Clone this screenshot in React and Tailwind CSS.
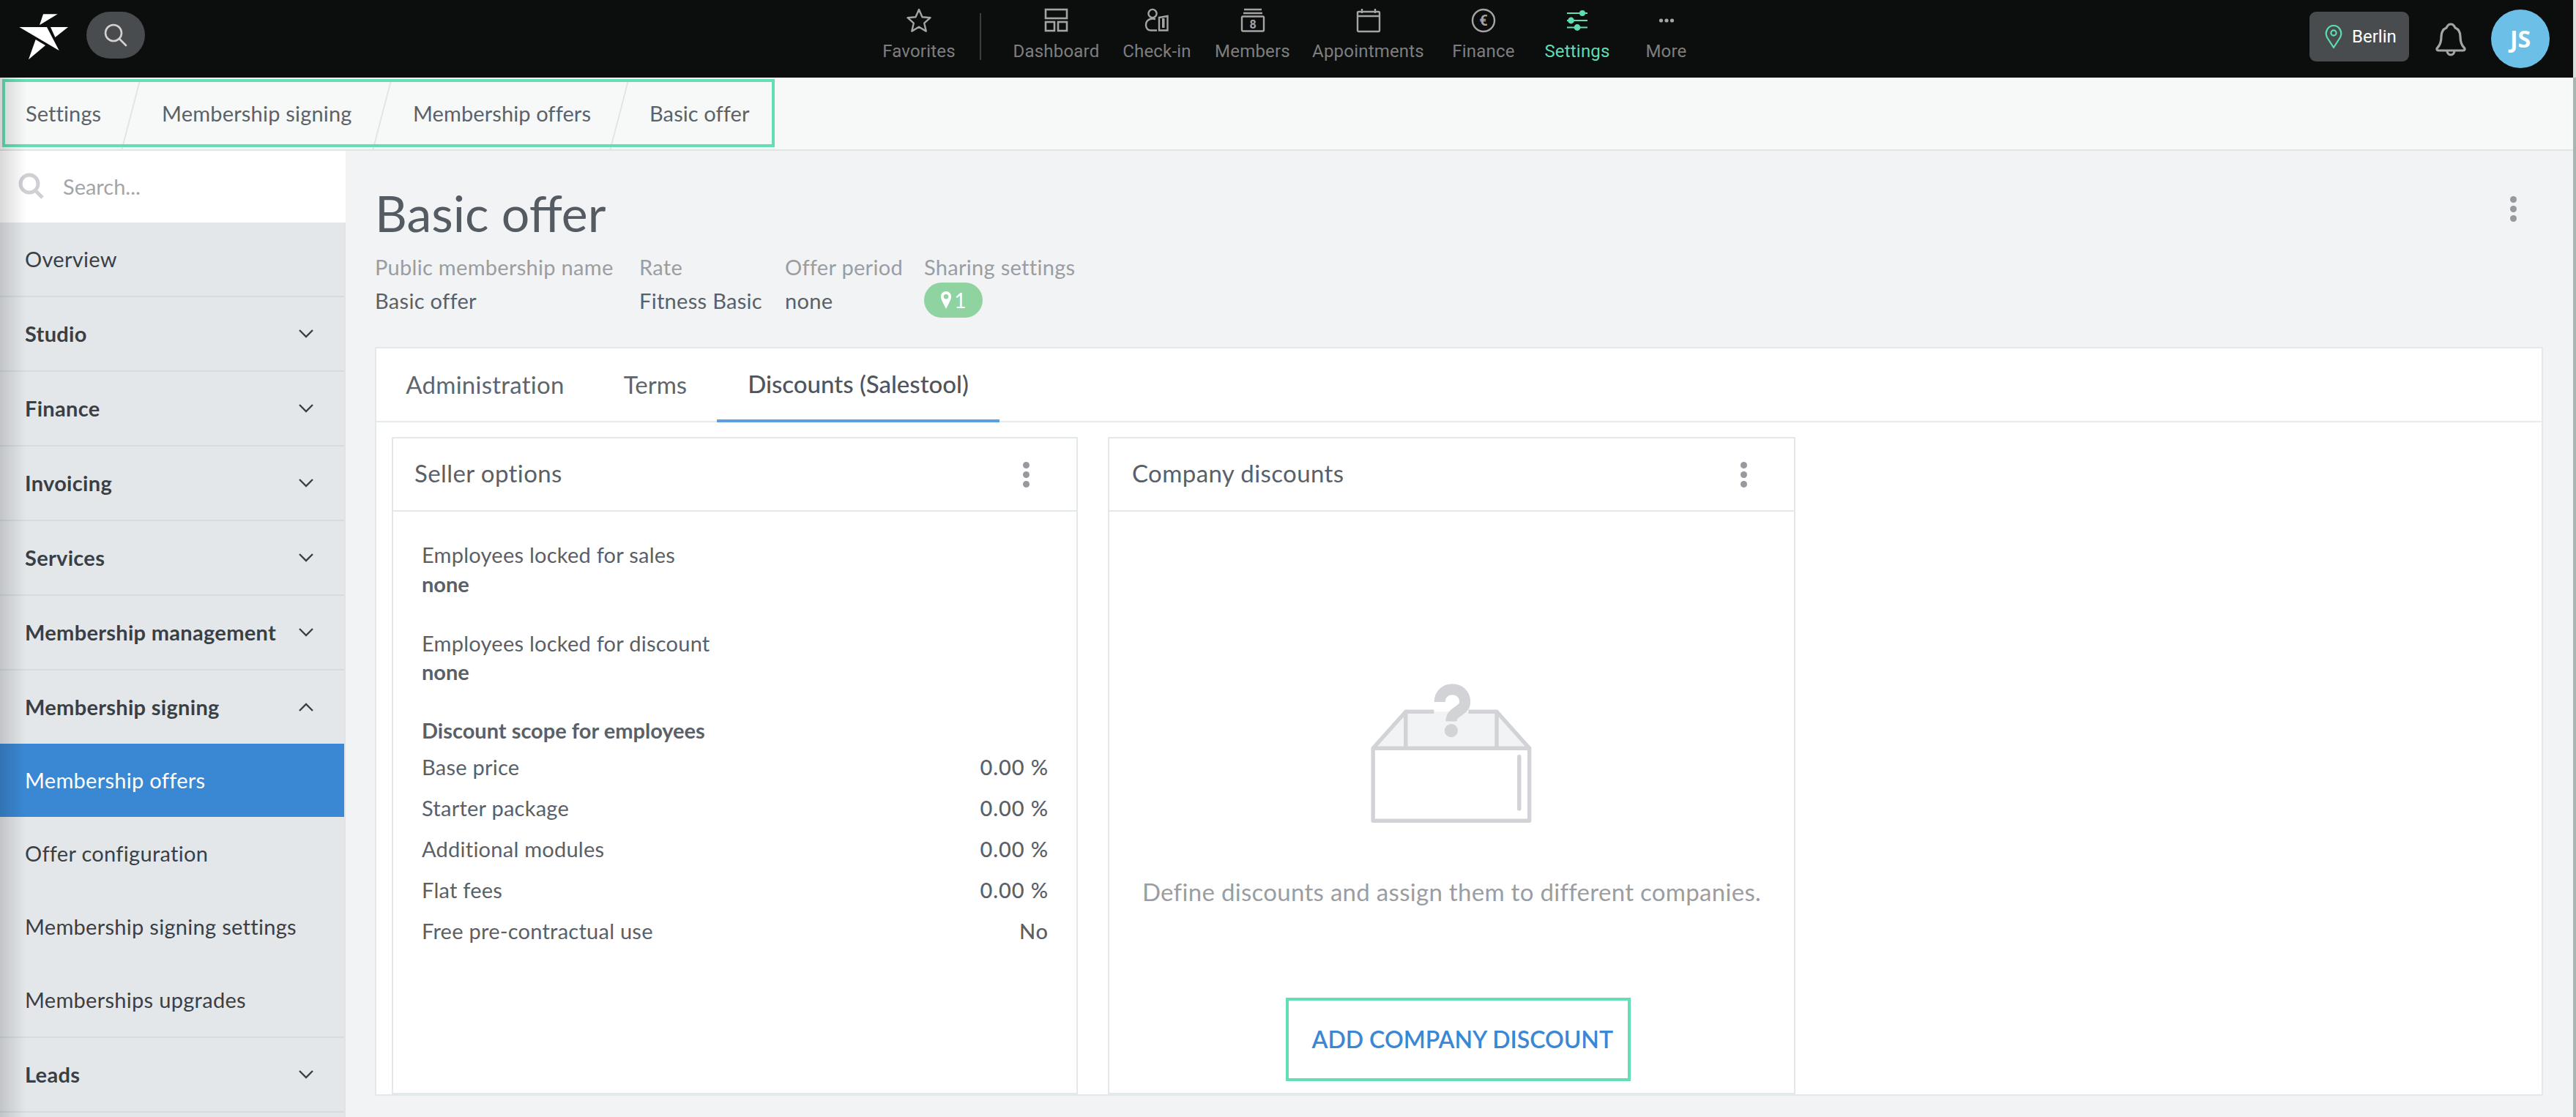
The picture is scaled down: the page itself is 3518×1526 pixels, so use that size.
import React from "react";

const Dots = ({ className = "" }) => (
  <div className={`flex flex-col gap-[4px] w-[10px] ${className}`}>
    <div className="w-[9px] h-[9px] rounded-full bg-[#98999e]" />
    <div className="w-[9px] h-[9px] rounded-full bg-[#98999e]" />
    <div className="w-[9px] h-[9px] rounded-full bg-[#98999e]" />
  </div>
);

const Chevron = ({ up }) => (
  <svg width="22" height="14" viewBox="0 0 22 14" fill="none" stroke="#3a3f45" strokeWidth="2.4" className="ml-auto mr-[41px]">
    <path d={up ? "M2 12 L11 3 L20 12" : "M2 2 L11 11 L20 2"} />
  </svg>
);

const g = "#a4a4a4";
const NavIcons = {
  star: (
    <svg width="34" height="34" viewBox="0 0 34 34" fill="none" stroke={g} strokeWidth="2.4" strokeLinejoin="round">
      <path d="M17 2 L21.5 12.2 L32.5 13.2 L24.2 20.6 L26.7 31.6 L17 25.8 L7.3 31.6 L9.8 20.6 L1.5 13.2 L12.5 12.2 Z" />
    </svg>
  ),
  dash: (
    <svg width="34" height="34" viewBox="0 0 34 34" fill="none" stroke={g} strokeWidth="2.6">
      <rect x="2" y="2" width="29" height="12" />
      <rect x="2" y="19" width="12" height="12" />
      <rect x="19" y="19" width="12" height="12" />
    </svg>
  ),
  check: (
    <svg width="34" height="34" viewBox="0 0 34 34" fill="none" stroke={g} strokeWidth="2.4">
      <circle cx="11" cy="7.5" r="5.6" />
      <path d="M15 15 C6 13 1.5 18 2 24 C2.5 29 5 30.5 9 30.5 L17 30.5" />
      <path d="M20 13 L31.5 11 L31.5 30.5 L20 30.5 Z" />
      <path d="M24 14 L27.5 14 L27.5 27 L24 27 Z" fill={g} stroke="none" />
    </svg>
  ),
  members: (
    <svg width="34" height="34" viewBox="0 0 34 34" fill="none" stroke={g} strokeWidth="2.4">
      <path d="M5 2 L29 2 M4 7 L30 7" />
      <rect x="2" y="11.5" width="30" height="20" rx="1.5" />
      <text x="17" y="28" textAnchor="middle" fontSize="16" fontWeight="700" fill={g} stroke="none" fontFamily="Roboto, sans-serif">8</text>
    </svg>
  ),
  cal: (
    <svg width="34" height="34" viewBox="0 0 34 34" fill="none" stroke={g} strokeWidth="2.4">
      <rect x="2" y="5" width="30" height="27" rx="1.5" />
      <path d="M2 11 L32 11 M8 1 L8 7 M26 1 L26 7" />
    </svg>
  ),
  euro: (
    <svg width="34" height="34" viewBox="0 0 34 34" fill="none" stroke={g} strokeWidth="2.4">
      <circle cx="17" cy="17" r="15" />
      <text x="17" y="24" textAnchor="middle" fontSize="20" fontWeight="700" fill={g} stroke="none" fontFamily="Roboto, sans-serif">€</text>
    </svg>
  ),
  settings: (
    <svg width="34" height="34" viewBox="0 0 34 34" fill="#5fdcb0" stroke="#5fdcb0" strokeWidth="2.2">
      <path d="M3 7 L31 7 M3 17 L31 17 M3 26.5 L31 26.5" />
      <circle cx="24" cy="7" r="4" stroke="none" />
      <circle cx="8.5" cy="17" r="4.4" stroke="none" />
      <circle cx="17" cy="26.5" r="4.4" stroke="none" />
    </svg>
  ),
  more: (
    <svg width="34" height="34" viewBox="0 0 34 34" fill={g}>
      <circle cx="9.5" cy="17" r="2.6" />
      <circle cx="17" cy="17" r="2.6" />
      <circle cx="24.5" cy="17" r="2.6" />
    </svg>
  ),
};

const NavItem = ({ icon, label, className, active }) => (
  <div className={`flex flex-col items-center pt-[11px] ${className}`}>
    <div className="h-[34px] flex items-center justify-center">{icon}</div>
    <div className={`mt-[10px] h-[30px] leading-[30px] text-[24px] tracking-[0.2px] whitespace-nowrap ${active ? "text-[#5fdcb0]" : "text-[#7e7e7e]"}`}>
      {label}
    </div>
  </div>
);

const Crumb = ({ children, className }) => (
  <div className={`flex items-center whitespace-nowrap text-[#5c6269] text-[29px] tracking-[0.1px] ${className}`}>{children}</div>
);
const CrumbSep = () => <div className="w-[2px] h-[96px] mt-[2px] bg-[#e2e5e5] skew-x-[-14.6deg]" />;

const SideHead = ({ label, up }) => (
  <div className={`flex items-center pl-[34px] font-bold text-[#3a3f45] text-[29px] tracking-[0.3px] ${up ? "h-[100px]" : "h-[102px] border-b-2 border-[#d5dbde]"}`}>
    <span>{label}</span>
    <Chevron up={up} />
  </div>
);
const SideSub = ({ label, active }) => (
  <div className={`flex items-center h-[100px] pl-[34px] text-[29px] tracking-[0.3px] ${active ? "bg-[#3a88d4] text-white" : "text-[#3a3f45]"}`}>{label}</div>
);

const Row = ({ label, value }) => (
  <div className="flex items-center justify-between h-[56px]">
    <span>{label}</span>
    <span className="font-medium tracking-[0.9px] -mr-[1px]">{value}</span>
  </div>
);

const Card = ({ className, children }) => (
  <div className={`flex flex-col border-2 border-[#e3e8ea] bg-white ${className}`}>
    <div className="flex items-center h-[100px] border-b-2 border-[#e3e8ea] shrink-0 text-[33px] text-[#5a6067] tracking-[0.4px]">
      {children[0]}
    </div>
    {children[1]}
  </div>
);

const Meta = ({ label, value, className }) => (
  <div className={`whitespace-nowrap ${className}`}>
    <div className="h-[44px] leading-[40px] text-[#9a9da1]">{label}</div>
    <div className="h-[44px] leading-[44px] text-[#5a6067]">{value}</div>
  </div>
);

export default function App() {
  return (
    <div className="relative w-[3518px] h-[1526px] overflow-hidden flex flex-col bg-[#f2f3f5] [font-family:Lato,sans-serif]">
      {/* Top bar */}
      <header className="h-[106px] shrink-0 flex bg-[#0c0e0e] [font-family:Roboto,sans-serif]">
        <svg width="74" height="68" viewBox="40 35 222 204" className="ml-[23px] mt-[17px]" fill="#ffffff">
          <polygon points="148,42 207,42 133,87" />
          <polygon points="50,95 163,95 213,191" />
          <polygon points="178,95 250,95 197,137" />
          <polygon points="117,146 157,170 88,228" />
        </svg>
        <div className="ml-[21px] mt-[16px] w-[80px] h-[64px] rounded-full bg-[#484c4e] flex items-center justify-center">
          <svg width="34" height="34" viewBox="0 0 34 34" fill="none" stroke="#d2d2d2" strokeWidth="2.6">
            <circle cx="14" cy="14" r="11" />
            <path d="M22 22 L31 31" strokeLinecap="round" />
          </svg>
        </div>
        <div className="ml-[1006px] flex">
          <NavItem icon={NavIcons.star} label="Favorites" className="w-[102px]" />
          <div className="ml-[32px] mt-[18px] w-[2px] h-[64px] bg-[#3c3e3e]" />
          <NavItem icon={NavIcons.dash} label="Dashboard" className="ml-[43px] w-[119px]" />
          <NavItem icon={NavIcons.check} label="Check-in" className="ml-[31px] w-[94px]" />
          <NavItem icon={NavIcons.members} label="Members" className="ml-[31px] w-[105px]" />
          <NavItem icon={NavIcons.cal} label="Appointments" className="ml-[28px] w-[155px]" />
          <NavItem icon={NavIcons.euro} label="Finance" className="ml-[37px] w-[86px]" />
          <NavItem icon={NavIcons.settings} label="Settings" className="ml-[40px] w-[90px]" active />
          <NavItem icon={NavIcons.more} label="More" className="ml-[48px] w-[57px]" />
        </div>
        <div className="ml-auto flex items-center mr-[36px]">
          <div className="h-[68px] w-[136px] mt-[-6px] rounded-[9px] bg-[#484c4e] flex items-center pl-[20px]">
            <svg width="26" height="34" viewBox="0 0 26 34" fill="none" stroke="#5fdcb0" strokeWidth="2.2">
              <path d="M13 32 L4 18 C0.5 11 5 2 13 2 C21 2 25.5 11 22 18 Z" strokeLinejoin="round" />
              <circle cx="13" cy="12" r="3.6" />
            </svg>
            <span className="ml-[12px] text-white text-[24px]">Berlin</span>
          </div>
          <svg width="42" height="48" viewBox="0 0 42 48" fill="none" stroke="#a4a4a4" strokeWidth="3.2" strokeLinejoin="round" className="ml-[36px] mt-[2px]">
            <path d="M21 3 C25 3 26 6 27 8 C32 10 34 15 34 20 C34 27 35 31 39 35 C41 37 40 39 38 39 L4 39 C2 39 1 37 3 35 C7 31 8 27 8 20 C8 15 10 10 15 8 C16 6 17 3 21 3 Z" />
            <path d="M16 39 C16 47 26 47 26 39" />
          </svg>
          <div className="ml-[34px] w-[80px] h-[80px] rounded-full bg-[#6cc0e8] text-white font-bold text-[32px] flex items-center justify-center [font-family:'Open_Sans',sans-serif]">
            JS
          </div>
        </div>
      </header>

      {/* Breadcrumb */}
      <div className="h-[100px] shrink-0 bg-[#f7f9f8] border-b-2 border-[#dfe4e5] flex">
        <div className="relative flex h-full">
          <Crumb className="pl-[35px] w-[178px]">Settings</Crumb>
          <CrumbSep />
          <Crumb className="pl-[41px] w-[341px] tracking-[0.2px]">Membership signing</Crumb>
          <CrumbSep />
          <Crumb className="pl-[41px] w-[322px]">Membership offers</Crumb>
          <CrumbSep />
          <Crumb className="pl-[40px] w-[176px]">Basic offer</Crumb>
          <div className="absolute left-[3px] top-[2px] w-[1055px] h-[93px] border-4 border-[#64dfb5]" />
        </div>
      </div>

      <div className="flex flex-1 min-h-0">
        {/* Sidebar */}
        <aside className="w-[472px] shrink-0 bg-[#e4e7ea] border-r-2 border-[#dfe5e6] flex flex-col">
          <div className="h-[98px] bg-white flex items-center pl-[24px] shrink-0 -mr-[2px]">
            <svg width="38" height="38" viewBox="0 0 38 38" fill="none" stroke="#cfd0d4" strokeWidth="5">
              <circle cx="16" cy="15" r="12" />
              <path d="M24 24 L34 34" />
            </svg>
            <span className="ml-[24px] text-[29px] text-[#a3a5aa]">Search...</span>
          </div>
          <div className="flex items-center h-[102px] pl-[34px] text-[#3a3f45] text-[29px] tracking-[0.3px] border-b-2 border-[#d5dbde]">Overview</div>
          <SideHead label="Studio" />
          <SideHead label="Finance" />
          <SideHead label="Invoicing" />
          <SideHead label="Services" />
          <SideHead label="Membership management" />
          <SideHead label="Membership signing" up />
          <SideSub label="Membership offers" active />
          <SideSub label="Offer configuration" />
          <SideSub label="Membership signing settings" />
          <SideSub label="Memberships upgrades" />
          <div className="border-t-2 border-[#d5dbde]">
            <SideHead label="Leads" />
          </div>
        </aside>

        {/* Main */}
        <main className="flex-1 min-w-0 pl-[40px] pr-[45px]">
          <div className="relative">
            <h1 className="pt-[47px] h-[125px] text-[68px] leading-[76px] text-[#555b62]">Basic offer</h1>
            <Dots className="absolute right-[35px] top-[62px]" />
          </div>
          <div className="mt-[14px] flex gap-[34px] text-[29px] tracking-[0.3px]">
            <Meta className="w-[327px]" label="Public membership name" value="Basic offer" />
            <Meta className="w-[165px]" label="Rate" value="Fitness Basic" />
            <Meta className="w-[156px]" label="Offer period" value="none" />
            <div className="whitespace-nowrap">
              <div className="h-[41px] leading-[40px] text-[#9a9da1]">Sharing settings</div>
              <div className="w-[80px] h-[48px] rounded-full bg-[#8fd3a0] text-white flex items-center justify-center gap-[3px]">
                <svg width="16" height="26" viewBox="0 0 16 26" fill="#ffffff">
                  <path fillRule="evenodd" d="M8 25 L2 13 C-1 6 3 1 8 1 C13 1 17 6 14 13 Z M8 5 A3.2 3.2 0 1 0 8 11.4 A3.2 3.2 0 1 0 8 5 Z" />
                </svg>
                <span className="text-[28px]">1</span>
              </div>
            </div>
          </div>

          {/* Main card */}
          <section className="mt-[40px] h-[1023px] bg-white border-2 border-[#e3e8ea] flex flex-col">
            <div className="h-[101px] shrink-0 border-b-2 border-[#e8ebed] flex text-[33px] text-[#5f656c] whitespace-nowrap">
              <div className="w-[297px] flex items-center justify-center tracking-[0.25px]">Administration</div>
              <div className="w-[168px] flex items-center justify-center">Terms</div>
              <div className="w-[386px] flex items-center justify-center -mb-[2px] border-b-4 border-[#5ba0de] font-medium text-[#4f555c]">Discounts (Salestool)</div>
            </div>
            <div className="flex-1 min-h-0 flex gap-[41px] pt-[20px] pl-[21px]">
              <Card className="w-[937px]">
                {[
                  <React.Fragment key="h">
                    <span className="pl-[29px] pb-[3px]">Seller options</span>
                    <Dots className="ml-auto mr-[63px]" />
                  </React.Fragment>,
                  <div key="b" className="pt-[38px] px-[39px] text-[29px] tracking-[0.25px] text-[#5a6067]">
                    <div className="h-[42px] leading-[42px]">Employees locked for sales</div>
                    <div className="h-[42px] leading-[38px] font-bold tracking-normal">none</div>
                    <div className="mt-[37px] h-[42px] leading-[42px]">Employees locked for discount</div>
                    <div className="h-[40px] leading-[36px] font-bold tracking-normal">none</div>
                    <div className="mt-[37px] h-[43px] leading-[42px] font-bold tracking-normal">Discount scope for employees</div>
                    <Row label="Base price" value="0.00 %" />
                    <Row label="Starter package" value="0.00 %" />
                    <Row label="Additional modules" value="0.00 %" />
                    <Row label="Flat fees" value="0.00 %" />
                    <Row label="Free pre-contractual use" value="No" />
                  </div>,
                ]}
              </Card>
              <Card className="w-[939px]">
                {[
                  <React.Fragment key="h">
                    <span className="pl-[31px] pb-[3px]">Company discounts</span>
                    <Dots className="ml-auto mr-[63px]" />
                  </React.Fragment>,
                  <div key="b" className="flex flex-col items-center pt-[234px]">
                    <svg width="233" height="193" viewBox="600 585 380 320" fill="none" stroke="#d1d3d7" strokeWidth="9" strokeLinejoin="round">
                      <polygon points="612,733 686,650 892,650 966,733" fill="#f2f3f5" stroke="none" />
                      <path d="M612 733 L686 650 L750 650 M828 650 L892 650 L966 733 M686 650 L686 733 M892 650 L892 733" />
                      <rect x="612" y="733" width="354" height="164" fill="#ffffff" />
                      <path d="M943 752 L943 870" strokeLinecap="round" />
                      <path d="M763 628 C763 590 820 590 820 628 C820 650 789 648 789 672" strokeWidth="25" />
                      <circle cx="789" cy="693" r="15" fill="#d1d3d7" stroke="none" />
                    </svg>
                    <div className="mt-[70px] h-[44px] leading-[44px] text-[33px] tracking-[0.3px] text-[#9a9da1] whitespace-nowrap">Define discounts and assign them to different companies.</div>
                    <div className="mt-[123px] ml-[17px] w-[471px] h-[114px] border-4 border-[#64dfb5] flex items-center pl-[32px] text-[32px] font-semibold text-[#3a88d4] whitespace-nowrap">
                      ADD COMPANY DISCOUNT
                    </div>
                  </div>,
                ]}
              </Card>
            </div>
          </section>
        </main>
      </div>

      {/* Screen-edge shading lying over the page */}
      <div className="absolute left-0 top-[106px] bottom-0 w-[36px] pointer-events-none bg-linear-to-r from-black/15 to-transparent" />
      <div className="absolute right-0 top-0 h-[106px] w-[4px] bg-[#d5e0dc]" />
      <div className="absolute right-0 top-[106px] bottom-0 w-[4px] bg-[#a8b6b1]" />
    </div>
  );
}
